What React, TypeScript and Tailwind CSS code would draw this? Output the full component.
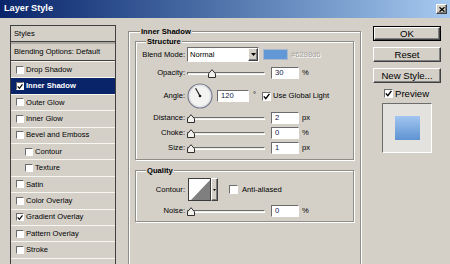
import React from 'react';

const raised =
  'border border-t-white border-l-white border-b-[#404040] border-r-[#404040] shadow-[inset_-1px_-1px_0_#808080]';
const sunken =
  'border border-t-[#6c6c6c] border-l-[#6c6c6c] border-b-white border-r-white';

function CheckBox({ checked, size = 'h-[9px] w-[9px]' }: { checked?: boolean; size?: string }) {
  return (
    <span className={`flex shrink-0 items-center justify-center bg-white ${sunken} ${size}`}>
      {checked && (
        <svg width="7" height="7" viewBox="0 0 7 7">
          <path d="M0.8 3.4 L2.8 5.6 L6.4 0.9" stroke="#000" strokeWidth="1.4" fill="none" />
        </svg>
      )}
    </span>
  );
}

function Legend({ children, className = '' }: { children: React.ReactNode; className?: string }) {
  return (
    <div className={`-mt-[6px] h-[11px] w-fit bg-[#d4d0c8] px-[1px] font-bold leading-[11px] ${className}`}>
      {children}
    </div>
  );
}

function Label({ children }: { children: React.ReactNode }) {
  return <div className="w-[49px] shrink-0 text-right">{children}</div>;
}

function Slider({ thumb = 'left-0' }: { thumb?: string }) {
  return (
    <div className="relative ml-[2px] h-[12px] w-[78px] shrink-0">
      <div className={`mt-[5px] h-[3px] bg-[#ecebe6] ${sunken}`} />
      <svg className={`absolute top-[2px] ${thumb}`} width="8" height="9" viewBox="0 0 8 9">
        <path d="M0.5 8.5 V4.8 L4 0.7 L7.5 4.8 V8.5 Z" fill="#f2f1ec" stroke="#2e2e2e" strokeWidth="1" />
      </svg>
    </div>
  );
}

function Field({ value, w = 'w-[28px]', className = '' }: { value: string; w?: string; className?: string }) {
  return (
    <div className={`flex h-[12px] shrink-0 items-center bg-white pl-[3px] text-[#10184a] ${sunken} ${w} ${className}`}>
      {value}
    </div>
  );
}

function SliderRow({ label, value, unit, thumb, className = '' }: { label: string; value: string; unit: string; thumb?: string; className?: string }) {
  return (
    <div className={`flex items-center ${className}`}>
      <Label>{label}</Label>
      <Slider thumb={thumb} />
      <Field value={value} className="ml-[6px]" />
      <span className="ml-[3px]">{unit}</span>
    </div>
  );
}

function DownArrow() {
  return (
    <svg width="5" height="3" viewBox="0 0 5 3">
      <path d="M0 0 H5 L2.5 3 Z" fill="#000" />
    </svg>
  );
}

function Button({ children, isDefault, className = '' }: { children: React.ReactNode; isDefault?: boolean; className?: string }) {
  if (isDefault) {
    return (
      <div className={`h-[15px] border border-black ${className}`}>
        <div className={`flex h-full items-center justify-center text-[9.6px] ${raised}`}>{children}</div>
      </div>
    );
  }
  return (
    <div className={`flex h-[15px] items-center justify-center text-[9.6px] ${raised} ${className}`}>{children}</div>
  );
}

const styleRows = [
  { name: 'Drop Shadow' },
  { name: 'Inner Shadow', checked: true, selected: true },
  { name: 'Outer Glow' },
  { name: 'Inner Glow' },
  { name: 'Bevel and Emboss' },
  { name: 'Contour', sub: true },
  { name: 'Texture', sub: true },
  { name: 'Satin' },
  { name: 'Color Overlay' },
  { name: 'Gradient Overlay', checked: true },
  { name: 'Pattern Overlay' },
  { name: 'Stroke' },
  { name: '' },
];

function StylesList() {
  return (
    <div className="ml-[10px] mt-[7px] h-[260px] w-[106px] shrink-0 border-x border-t border-[#404040]">
      <div className="flex h-[16px] items-center border-b border-[#404040] pl-[3px]">Styles</div>
      <div className="h-[2px] bg-[#a9a7a0]" />
      <div className="flex h-[17px] items-center border-b border-[#404040] pl-[3px]">Blending Options: Default</div>
      {styleRows.map((r, i) => (
        <div
          key={i}
          className={`flex h-[16.4px] items-center gap-[2px] border-t border-[#f7f6f1] ${r.sub ? 'pl-[14px]' : 'pl-[5px]'} ${
            r.selected ? 'bg-[#0a246a] font-bold text-white' : ''
          }`}
        >
          {r.name && <CheckBox checked={r.checked} size="h-[8px] w-[8px]" />}
          <span>{r.name}</span>
        </div>
      ))}
    </div>
  );
}

function Structure() {
  return (
    <div className="ml-[6px] mt-[4px] h-[119px] w-[219px] border border-[#8e8d87] shadow-[inset_1px_1px_0_#fff,1px_1px_0_#fff]">
      <Legend className="ml-[10px]">Structure</Legend>

      <div className="flex h-[15px] items-center">
        <Label>Blend Mode:</Label>
        <div className={`ml-[2px] flex h-[15px] w-[72px] items-center bg-white ${sunken}`}>
          <span className="flex-1 pl-[2px]">Normal</span>
          <span className={`flex h-full w-[10px] items-center justify-center bg-[#d4d0c8] ${raised}`}>
            <DownArrow />
          </span>
        </div>
        <div className="ml-[4px] h-[11px] w-[25px] border border-[#a9b8cc] bg-[#6298d6]" />
        <span className="ml-[3px] text-[#a4a29b] [text-shadow:1px_1px_0_#fff]">#6298d6</span>
      </div>

      <SliderRow label="Opacity:" value="30" unit="%" thumb="left-[21px]" className="mt-[4px] h-[14px]" />

      <div className="mt-[3px] flex h-[26px] items-center">
        <Label>Angle:</Label>
        <svg className="ml-[2px] shrink-0" width="26" height="26" viewBox="0 0 26 26">
          <circle cx="13" cy="13" r="12" fill="#f3f3f2" stroke="#7b7d8c" strokeWidth="1.2" />
          <circle cx="13" cy="13" r="10.6" fill="none" stroke="#dcdde4" strokeWidth="1" />
          <line x1="13" y1="13" x2="8.6" y2="5.2" stroke="#111" strokeWidth="1.1" />
          <circle cx="13" cy="13" r="1.3" fill="#111" />
        </svg>
        <Field value="120" w="w-[32px]" className="ml-[4px]" />
        <span className="w-[13px] shrink-0 self-start pl-[4px] pt-[8px]">°</span>
        <CheckBox checked />
        <span className="ml-[2px]">Use Global Light</span>
      </div>

      <SliderRow label="Distance:" value="2" unit="px" className="mt-[2px] h-[13px]" />
      <SliderRow label="Choke:" value="0" unit="%" className="mt-[2px] h-[13px]" />
      <SliderRow label="Size:" value="1" unit="px" className="mt-[2px] h-[13px]" />
    </div>
  );
}

function Quality() {
  return (
    <div className="ml-[6px] mt-[10px] h-[52px] w-[219px] border border-[#8e8d87] shadow-[inset_1px_1px_0_#fff,1px_1px_0_#fff]">
      <Legend className="ml-[10px]">Quality</Legend>

      <div className="mt-[2px] flex h-[23px] items-center">
        <Label>Contour:</Label>
        <div className="ml-[3px] h-[23px] w-[23px] shrink-0 border border-[#3c3c3c] bg-white">
          <svg width="21" height="21" viewBox="0 0 21 21">
            <polygon points="2,21 21,1 21,21" fill="#7f7f7f" />
          </svg>
        </div>
        <span className={`flex h-[23px] w-[7px] shrink-0 items-center justify-center bg-[#d4d0c8] ${raised}`}>
          <svg width="3" height="2" viewBox="0 0 3 2">
            <path d="M0 0 H3 L1.5 2 Z" fill="#000" />
          </svg>
        </span>
        <span className="ml-[11px]">
          <CheckBox />
        </span>
        <span className="ml-[4px]">Anti-aliased</span>
      </div>

      <SliderRow label="Noise:" value="0" unit="%" className="mt-[4px] h-[12px]" />
    </div>
  );
}

function RightColumn() {
  return (
    <div className="ml-[12px] mt-[8px] w-[68px] shrink-0">
      <Button isDefault>OK</Button>
      <Button className="mt-[6px]">Reset</Button>
      <Button className="mt-[6px]">New Style...</Button>
      <div className="mt-[6px] flex h-[9px] items-center gap-[2px] pl-[11px]">
        <CheckBox checked />
        <span className="text-[9.6px]">Preview</span>
      </div>
      <div className={`ml-[9px] mt-[5px] flex h-[50px] w-[50px] items-center justify-center bg-[#e3e2de] ${sunken}`}>
        <div className="h-[24px] w-[25px] bg-gradient-to-b from-[#a2c6f0] to-[#5e93d2]" />
      </div>
    </div>
  );
}

export default function App() {
  return (
    <div className="h-[264px] w-[450px] overflow-hidden bg-[#d4d0c8] font-['Liberation_Sans',Arial,sans-serif] text-[7.6px] leading-none text-black">
      <div className="flex h-[18px] items-center justify-between bg-gradient-to-r from-[#0a246a] to-[#a6caf0] pl-[4px] pr-[3px]">
        <span className="text-[9.2px] font-bold text-white">Layer Style</span>
        <span className={`flex h-[10px] w-[11px] items-center justify-center bg-[#d4d0c8] ${raised}`}>
          <svg width="6" height="5" viewBox="0 0 6 5">
            <path d="M0.5 0.3 L5.5 4.7 M5.5 0.3 L0.5 4.7" stroke="#000" strokeWidth="1.3" />
          </svg>
        </span>
      </div>

      <div className="flex">
        <StylesList />
        <div className="ml-[12px] mt-[13px] h-[240px] w-[233px] shrink-0 border border-[#8e8d87] shadow-[inset_1px_1px_0_#fff,1px_1px_0_#fff]">
          <Legend className="ml-[11px]">Inner Shadow</Legend>
          <Structure />
          <Quality />
        </div>
        <RightColumn />
      </div>
    </div>
  );
}
